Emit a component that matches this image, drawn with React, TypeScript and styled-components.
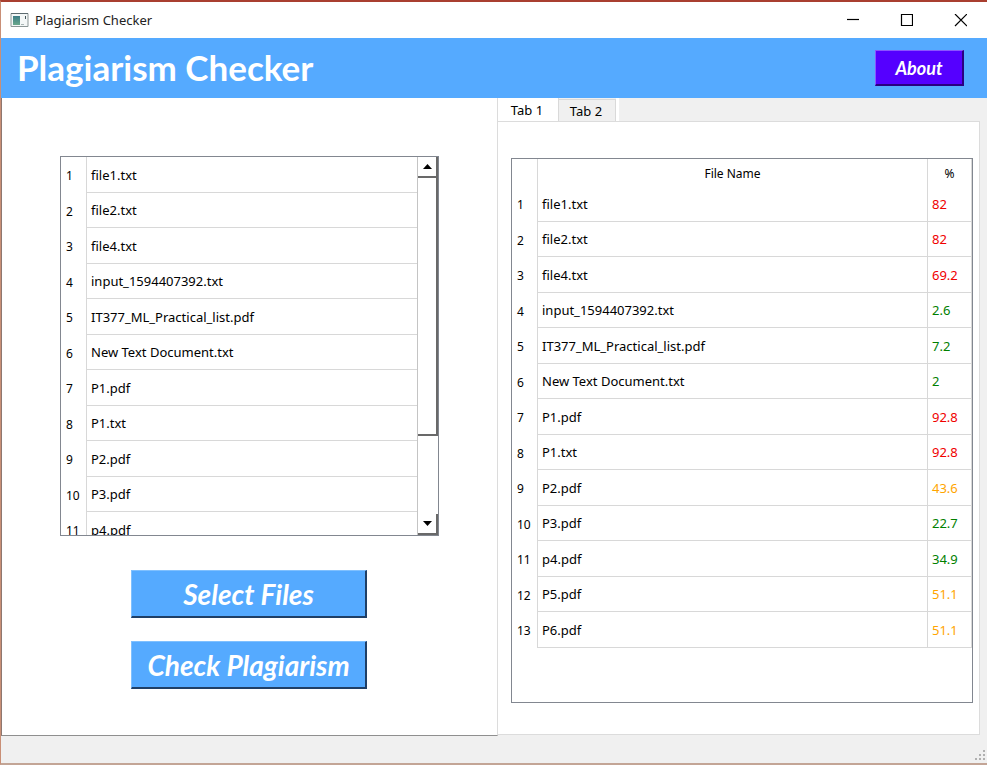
import React, { useRef, useState } from "react";
import styled, { createGlobalStyle } from "styled-components";

const GlobalStyle = createGlobalStyle`
  *, *::before, *::after { box-sizing: border-box; }
  body {
    margin: 0;
    background: #fff;
    color: #000;
    font: 13px/18px "Noto Sans", "Open Sans", sans-serif;
  }
  button { margin: 0; font: inherit; color: inherit; }
`;

const Window = styled.div`
  display: flex;
  flex-direction: column;
  min-height: calc(100vh - 1px);
  margin-right: 1px;
  border-top: 2px solid #a93f30;
  border-left: 1px solid #c98f76;
  border-bottom: 2px solid #c3a596;
`;

const TitleBar = styled.header`
  display: flex;
  align-items: center;
  height: 36px;
  padding-left: 9px;
  background: #fff;
`;

const WindowTitle = styled.span`
  flex: 1;
  margin-left: 6px;
  color: #222;
`;

const WindowButton = styled.button`
  display: grid;
  place-items: center;
  width: 54px;
  height: 34px;
  padding: 0;
  border: 0;
  background: transparent;
`;

const Banner = styled.div`
  display: flex;
  align-items: center;
  justify-content: space-between;
  height: 60px;
  padding: 0 23px 0 16px;
  background: #55aaff;
  color: #fff;
`;

const Heading = styled.h1`
  margin: 0;
  padding-bottom: 2px;
  font: bold 35px/42px Lato, sans-serif;
`;

const RaisedButton = styled.button<{ $compact?: boolean }>`
  width: ${(p) => (p.$compact ? "89px" : "236px")};
  height: ${(p) => (p.$compact ? "36px" : "48px")};
  padding: 0;
  border: solid;
  border-width: 1px 2px 2px 1px;
  border-color: ${(p) => (p.$compact ? "#8a55ff #2a0080 #2a0080 #8a55ff" : "#7fc0ff #1f3f66 #1f3f66 #7fc0ff")};
  background: ${(p) => (p.$compact ? "#5500ff" : "#55aaff")};
  color: #fff;
  font: italic bold ${(p) => (p.$compact ? "18px/24px" : "28px/32px")} Lato, sans-serif;
  white-space: nowrap;
`;

const Body = styled.main`
  display: grid;
  grid-template-columns: 497fr 489fr;
  flex: 1;
`;

const FilesPanel = styled.section`
  display: flex;
  flex-direction: column;
  align-items: center;
  padding-top: 58px;
  border-left: 1px solid #8d7770;
  border-right: 1px solid #dcdcdc;
  border-bottom: 1px solid #8f8f8f;
  background: #fff;
`;

const FileList = styled.div`
  display: flex;
  width: 379px;
  max-width: 100%;
  height: 380px;
  border: 1px solid #828790;
  overflow: hidden;
`;

const ListViewport = styled.div`
  flex: 1;
  overflow-x: hidden;
  overflow-y: auto;
  scrollbar-width: none;
`;

const Actions = styled.div`
  display: grid;
  gap: 23px;
  margin-top: 34px;
  padding-right: 1px;
`;

const ScrollTrack = styled.div`
  display: flex;
  flex-direction: column;
  width: 21px;
  border-left: 1px solid #c4c4c4;
`;

const ScrollButton = styled.button`
  display: grid;
  place-items: center;
  height: 21px;
  padding: 0;
  border: solid #696969;
  border-width: 0 2px 2px 0;
  background: #fff;
`;

const ScrollThumb = styled.div`
  height: 258px;
  border: solid #696969;
  border-width: 0 2px 2px 0;
`;

const ScrollSpace = styled.div`
  flex: 1;
`;

const ResultsPanel = styled.section`
  display: flex;
  flex-direction: column;
  padding: 0 7px 1px 0;
  background: #f0f0f0;
`;

const TabList = styled.div`
  display: flex;
  align-items: flex-end;
  height: 23px;
`;

const Tab = styled.button<{ $active: boolean }>`
  width: ${(p) => (p.$active ? "61px" : "57px")};
  height: ${(p) => (p.$active ? "24px" : "22px")};
  margin-bottom: ${(p) => (p.$active ? "-1px" : "0")};
  padding: 0 2px 0 0;
  border: solid #d9d9d9;
  border-width: ${(p) => (p.$active ? "0 1px 0 0" : "1px 1px 0 0")};
  background: ${(p) => (p.$active ? "#fff" : "#f0f0f0")};
`;

const TabGap = styled.div`
  width: 3px;
  height: 23px;
  background: #fff;
`;

const TabPane = styled.div`
  display: flex;
  flex: 1;
  padding: 36px 6px 31px 13px;
  border: solid #dcdcdc;
  border-width: 1px 1px 1px 0;
  background: #fff;
`;

const TableFrame = styled.div`
  flex: 1;
  border: 1px solid #828790;
`;

const Table = styled.table`
  width: 100%;
  border-collapse: separate;
  border-spacing: 0;
  table-layout: fixed;
`;

const Column = styled.col<{ $width?: number }>`
  width: ${(p) => (p.$width ? `${p.$width}px` : "auto")};
`;

const ColumnHeader = styled.th`
  height: 27px;
  padding: 2px 0 0;
  border-right: 1px solid #d8d8d8;
  font-size: 12px;
  font-weight: 400;
  text-align: center;
`;

const Row = styled.tr`
  height: 36px;
  &:nth-child(even) { height: 35px; }
`;

const RowNumber = styled.th`
  padding: 2px 0 0 5px;
  border-right: 1px solid #d8d8d8;
  font-size: 12px;
  font-weight: 400;
  text-align: left;
`;

const Cell = styled.td<{ $color?: string; $divided?: boolean }>`
  padding: 0 0 0 4px;
  border-bottom: 1px solid #d8d8d8;
  border-right: ${(p) => (p.$divided ? "1px solid #d8d8d8" : "0")};
  color: ${(p) => p.$color || "#000"};
  white-space: nowrap;
`;

const StatusBar = styled.footer`
  display: flex;
  justify-content: flex-end;
  align-items: flex-end;
  height: 27px;
  padding: 0 1px 2px;
  background: #f0f0f0;
`;

const red = "#f00000";
const green = "#008000";
const orange = "#ffa500";

const files = [
  { name: "file1.txt", score: "82", color: red },
  { name: "file2.txt", score: "82", color: red },
  { name: "file4.txt", score: "69.2", color: red },
  { name: "input_1594407392.txt", score: "2.6", color: green },
  { name: "IT377_ML_Practical_list.pdf", score: "7.2", color: green },
  { name: "New Text Document.txt", score: "2", color: green },
  { name: "P1.pdf", score: "92.8", color: red },
  { name: "P1.txt", score: "92.8", color: red },
  { name: "P2.pdf", score: "43.6", color: orange },
  { name: "P3.pdf", score: "22.7", color: green },
  { name: "p4.pdf", score: "34.9", color: green },
  { name: "P5.pdf", score: "51.1", color: orange },
  { name: "P6.pdf", score: "51.1", color: orange },
];

function AppIcon() {
  return (
    <svg width="19" height="16" viewBox="0 0 19 16" aria-hidden="true">
      <defs>
        <linearGradient id="pane" x2="0" y2="1">
          <stop stopColor="#3c7c86" />
          <stop offset="1" stopColor="#6aa88c" />
        </linearGradient>
      </defs>
      <path d="M1 1.5h17v13H1z" fill="#f4f7f7" stroke="#8c9696" />
      <path d="M1 1.5h17" stroke="#5d6b70" />
      <path d="M3 4h7v9H3z" fill="url(#pane)" />
      <path d="M11 12.5h3" stroke="#a9b5b5" />
      <path d="M15.5 4v3" stroke="#44565a" />
    </svg>
  );
}

function Arrow({ down }: { down?: boolean }) {
  return (
    <svg width="9" height="5" viewBox="0 0 9 5" aria-hidden="true">
      <path d={down ? "M0 0h9L4.5 5z" : "M0 5h9L4.5 0z"} />
    </svg>
  );
}

function Grip() {
  return (
    <svg width="11" height="11" viewBox="0 0 11 11" fill="#b0b0b0" aria-hidden="true">
      <path d="M8 0h2v2H8zM4 4h2v2H4zM8 4h2v2H8zM0 8h2v2H0zM4 8h2v2H4zM8 8h2v2H8z" />
    </svg>
  );
}

export default function App() {
  const [tab, setTab] = useState(1);
  const viewport = useRef<HTMLDivElement>(null);
  const scroll = (top: number) => viewport.current?.scrollBy({ top });

  return (
    <>
      <GlobalStyle />
      <Window>
        <TitleBar>
          <AppIcon />
          <WindowTitle>Plagiarism Checker</WindowTitle>
          <WindowButton aria-label="Minimize">
            <svg width="13" height="13" stroke="#000" strokeWidth="1.2"><path d="M1 5.5h12" /></svg>
          </WindowButton>
          <WindowButton aria-label="Maximize">
            <svg width="13" height="13" fill="none" stroke="#000" strokeWidth="1.2"><path d="M1.5.5h11v11h-11z" /></svg>
          </WindowButton>
          <WindowButton aria-label="Close">
            <svg width="13" height="13" stroke="#000" strokeWidth="1.2"><path d="M1 0l12 12M13 0L1 12" /></svg>
          </WindowButton>
        </TitleBar>
        <Banner>
          <Heading>Plagiarism Checker</Heading>
          <RaisedButton $compact>About</RaisedButton>
        </Banner>
        <Body>
          <FilesPanel>
            <FileList>
              <ListViewport ref={viewport}>
                <Table aria-label="Selected files">
                  <colgroup><Column $width={26} /><Column /></colgroup>
                  <tbody>
                    {files.map((f, i) => (
                      <Row key={f.name}>
                        <RowNumber scope="row">{i + 1}</RowNumber>
                        <Cell>{f.name}</Cell>
                      </Row>
                    ))}
                  </tbody>
                </Table>
              </ListViewport>
              <ScrollTrack>
                <ScrollButton aria-label="Scroll up" onClick={() => scroll(-36)}><Arrow /></ScrollButton>
                <ScrollThumb />
                <ScrollSpace />
                <ScrollButton aria-label="Scroll down" onClick={() => scroll(36)}><Arrow down /></ScrollButton>
              </ScrollTrack>
            </FileList>
            <Actions>
              <RaisedButton>Select Files</RaisedButton>
              <RaisedButton>Check Plagiarism</RaisedButton>
            </Actions>
          </FilesPanel>
          <ResultsPanel>
            <TabList role="tablist">
              <Tab role="tab" aria-selected={tab === 1} $active={tab === 1} onClick={() => setTab(1)}>Tab 1</Tab>
              <Tab role="tab" aria-selected={tab === 2} $active={tab === 2} onClick={() => setTab(2)}>Tab 2</Tab>
              <TabGap />
            </TabList>
            <TabPane role="tabpanel">
              <TableFrame>
                <Table aria-label="Results">
                  <colgroup><Column $width={26} /><Column /><Column $width={44} /></colgroup>
                  <thead>
                    <tr>
                      <ColumnHeader aria-label="Row" />
                      <ColumnHeader scope="col">File Name</ColumnHeader>
                      <ColumnHeader scope="col">%</ColumnHeader>
                    </tr>
                  </thead>
                  <tbody>
                    {files.map((f, i) => (
                      <Row key={f.name}>
                        <RowNumber scope="row">{i + 1}</RowNumber>
                        <Cell $divided>{f.name}</Cell>
                        <Cell $divided $color={f.color}>{f.score}</Cell>
                      </Row>
                    ))}
                  </tbody>
                </Table>
              </TableFrame>
            </TabPane>
          </ResultsPanel>
        </Body>
        <StatusBar><Grip /></StatusBar>
      </Window>
    </>
  );
}
